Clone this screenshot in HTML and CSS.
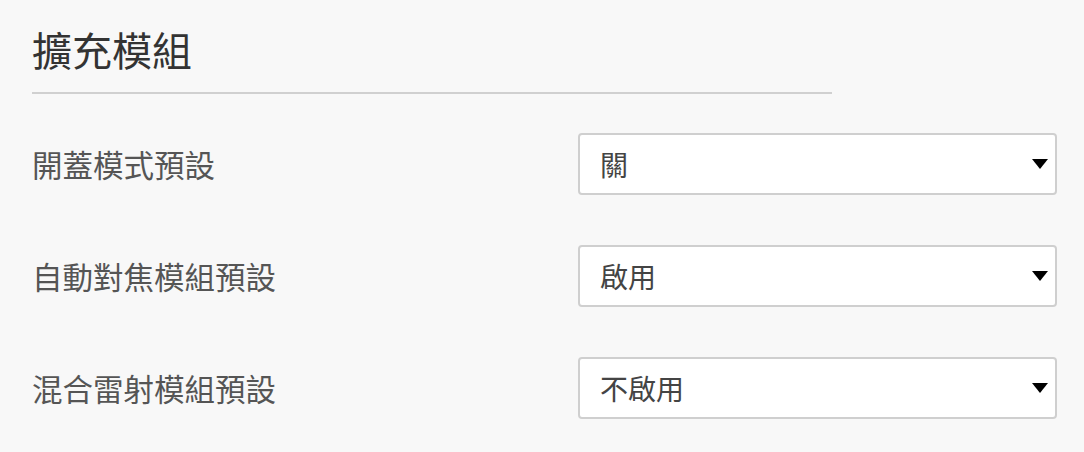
FILE: index.html
```html
<!DOCTYPE html>
<html lang="zh-Hant">
<head>
<meta charset="utf-8">
<title>擴充模組</title>
<link rel="stylesheet" href="styles.css">
</head>
<body>
<div class="page">
  <h2 class="title">擴充模組</h2>
  <div class="rows">
    <div class="row">
      <label class="label">開蓋模式預設</label>
      <div class="select-wrap">
        <select class="select"><option>關</option><option>開</option></select>
      </div>
    </div>
    <div class="row">
      <label class="label">自動對焦模組預設</label>
      <div class="select-wrap">
        <select class="select"><option>啟用</option><option>不啟用</option></select>
      </div>
    </div>
    <div class="row">
      <label class="label">混合雷射模組預設</label>
      <div class="select-wrap">
        <select class="select"><option>不啟用</option><option>啟用</option></select>
      </div>
    </div>
  </div>
</div>
</body>
</html>
```
FILE: styles.css
```css
html, body {
  margin: 0;
  padding: 0;
  background: #f8f8f8;
  font-family: "Noto Sans CJK TC", "Noto Sans", sans-serif;
}
.page {
  padding: 25px 0 0 32px;
  width: 1025px;
}
.title {
  margin: 0;
  width: 800px;
  font-size: 40px;
  line-height: 48px;
  font-weight: 400;
  color: #333;
  padding-bottom: 19px;
  border-bottom: 2px solid #d0d0d0;
}
.rows {
  margin-top: 39px;
  display: flex;
  flex-direction: column;
  gap: 50px;
}
.row {
  display: flex;
  justify-content: space-between;
  align-items: center;
}
.label {
  font-size: 30.5px;
  line-height: 40px;
  color: #555;
}
.select-wrap {
  position: relative;
  width: 479px;
}
.select-wrap::after {
  content: "";
  position: absolute;
  right: 9px;
  top: 26px;
  width: 0;
  height: 0;
  border-left: 8px solid transparent;
  border-right: 8px solid transparent;
  border-top: 10px solid #000;
  pointer-events: none;
}
.select {
  appearance: none;
  -webkit-appearance: none;
  display: block;
  width: 100%;
  height: 62px;
  box-sizing: border-box;
  border: 2px solid #cfcfcf;
  border-radius: 4px;
  background: #fff;
  padding: 0 40px 0 20px;
  font-family: "Noto Sans CJK TC", "Noto Sans", sans-serif;
  font-size: 28px;
  color: #444;
  outline: none;
}
```
